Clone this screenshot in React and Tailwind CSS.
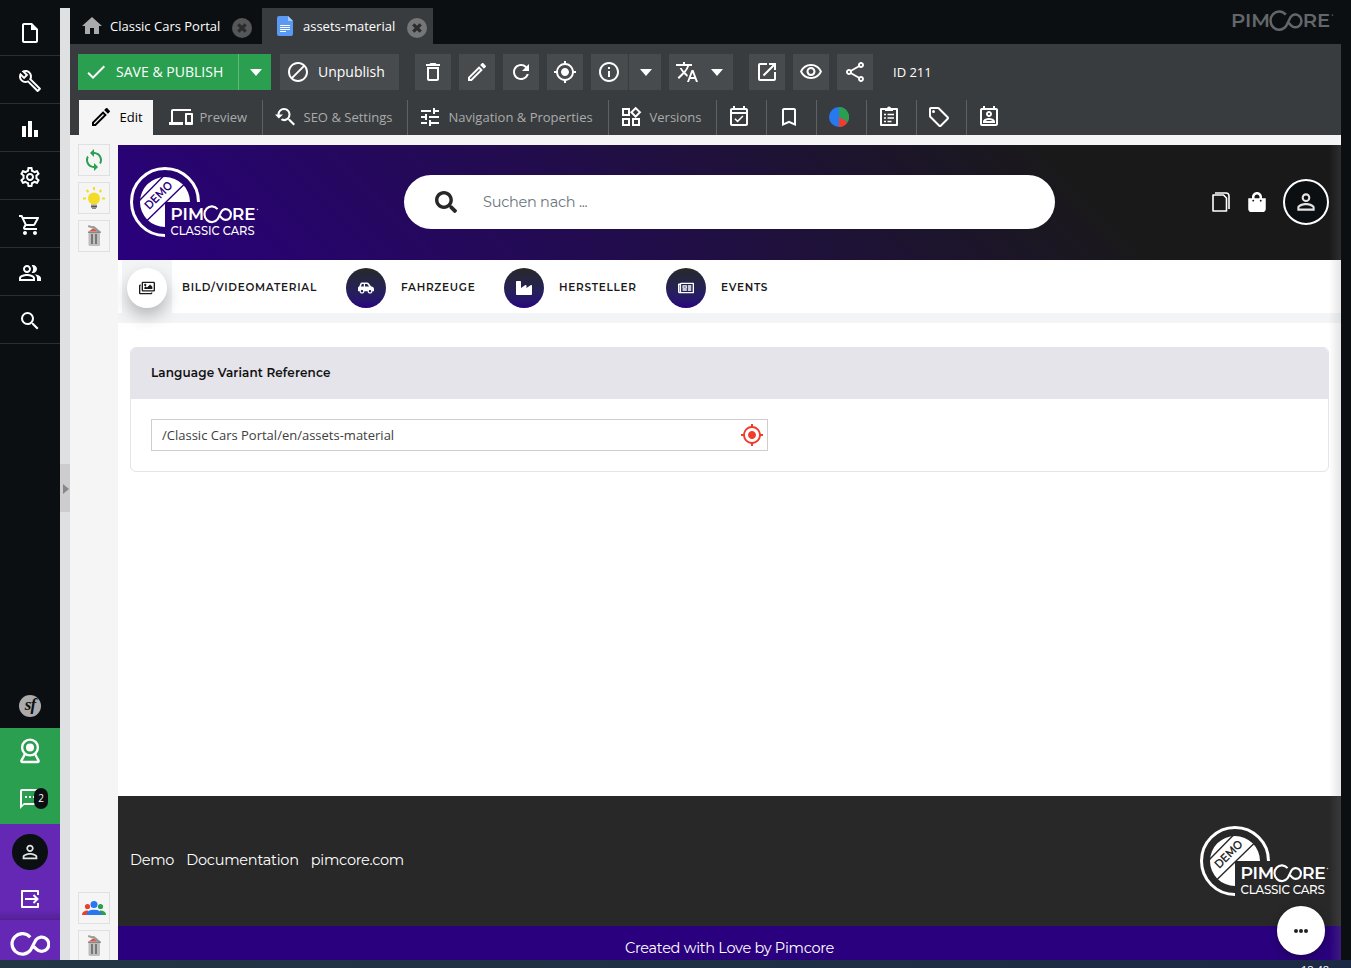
import React from "react";
import {
  MdOutlineInsertDriveFile, MdOutlineBuild, MdBarChart, MdOutlineSettings, MdOutlineShoppingCart,
  MdOutlinePeopleAlt, MdSearch, MdOutlineTextsms, MdPersonOutline, MdHome, MdCheck, MdBlock,
  MdDeleteOutline, MdOutlineEdit, MdRefresh, MdGpsFixed, MdInfoOutline, MdTranslate, MdOpenInNew,
  MdOutlineVisibility, MdOutlineShare, MdOutlineDevices, MdYoutubeSearchedFor, MdTune,
  MdOutlineWidgets, MdOutlineEventAvailable, MdBookmarkBorder, MdOutlineLocalOffer,
  MdOutlinePermContactCalendar, MdSync,
} from "react-icons/md";
import { FaSearch, FaShoppingBag, FaRegImages, FaCarSide, FaIndustry, FaRegNewspaper } from "react-icons/fa";

const LOOP = "M20.2 5.2 A10.3 10.3 0 1 0 20.6 18 L25.8 8 A7.2 7.2 0 1 1 26.4 17.2 L23.8 14.6";
const BRAND_FONT = "Montserrat, Inter, sans-serif";

function Caret() {
  return (
    <svg width="12" height="7" viewBox="0 0 12 7" className="fill-white">
      <path d="M0 0h12L6 7z" />
    </svg>
  );
}

function CloseDot({ fill }) {
  return (
    <svg width="20" height="20" viewBox="0 0 20 20" className="mt-[3px] shrink-0">
      <circle cx="10" cy="10" r="10" fill={fill} />
      <path d="M6.3 6.3l7.4 7.4M13.7 6.3l-7.4 7.4" stroke="#2a2c2e" strokeWidth="3.2" />
    </svg>
  );
}

function DocIcon() {
  return (
    <svg width="16" height="20" viewBox="0 0 16 20">
      <path d="M2 0h9l5 5v13a2 2 0 0 1-2 2H2a2 2 0 0 1-2-2V2a2 2 0 0 1 2-2z" fill="#5a9af5" />
      <path d="M11 0l5 5h-5z" fill="#a9cbfb" />
      <path d="M3 9.500h10M3 11.500h10M3 13.500h10M3 15.500h6" stroke="#fff" strokeWidth="1" />
    </svg>
  );
}

function ClipboardIcon() {
  return (
    <svg width="24" height="24" viewBox="0 0 24 24" fill="none" stroke="#fff" strokeWidth="2">
      <path d="M4 4h16v16H4z" strokeLinejoin="round" />
      <path d="M8 3h8v3H8z" fill="#fff" stroke="none" />
      <circle cx="12" cy="3.4" r="2" fill="#fff" stroke="none" />
      <path d="M7 9.5h2M10.500 9.5h6.500M7 13h2M10.500 13h6.500M7 16.500h2M10.500 16.500h4" strokeWidth="1.300" />
    </svg>
  );
}

function PieIcon() {
  return (
    <svg width="20" height="20" viewBox="0 0 20 20">
      <circle cx="10" cy="10" r="10" fill="#2878f0" />
      <path d="M10 10V0a10 10 0 0 1 8.7 15z" fill="#2a9f4f" />
      <path d="M10 10l8.7 5A10 10 0 0 1 10 20z" fill="#f23c2b" />
    </svg>
  );
}

function BulbIcon() {
  return (
    <svg width="24" height="24" viewBox="0 0 24 24">
      <circle cx="12" cy="12.500" r="6" fill="#f2dc27" />
      <path d="M12 1v3M4.500 4l2 2M19.500 4l-2 2M1 12.500h3M20 12.500h3" stroke="#f2dc27" strokeWidth="2" />
      <path d="M9 18.500h6v2H9z" fill="#999" />
      <path d="M9 20h6v1.500H9z" fill="#555" />
      <path d="M10 21.500h4V23h-4z" fill="#888" />
    </svg>
  );
}

function BinIcon() {
  return (
    <svg width="24" height="24" viewBox="0 0 24 24">
      <path d="M6.500 7.500l4-2.700 3 .5 3 2.200z" fill="#f0503c" />
      <path d="M6.500 1l3.500 1.200 2-.2 2.500 2 4.500 4-.8 1.200L11.500 4.800 6 3z" fill="#999" />
      <path d="M6 7.500h12.500V9H6z" fill="#888" />
      <path d="M6.500 9h11.500v11.500a1.500 1.500 0 0 1-1.500 1.500H8a1.500 1.500 0 0 1-1.500-1.500z" fill="#bdbdbd" />
      <path d="M10 10v10M14 10v10" stroke="#777" strokeWidth="2" />
    </svg>
  );
}

function TeamIcon() {
  return (
    <svg width="24" height="24" viewBox="0 0 24 24">
      <circle cx="5.500" cy="10.500" r="2.600" fill="#f23c2b" />
      <circle cx="18.500" cy="10.500" r="2.600" fill="#2a9f4f" />
      <path d="M0 19q0-4.500 6-4.500V19z" fill="#f23c2b" />
      <path d="M24 19q0-4.500-6-4.500V19z" fill="#2a9f4f" />
      <circle cx="12" cy="8.500" r="3.500" fill="#2878f0" />
      <path d="M4.500 19q0-5.200 7.500-5.200t7.500 5.200z" fill="#2878f0" />
    </svg>
  );
}

function Brand({ fill, width, height }) {
  return (
    <svg width={width} height={height} viewBox="0 0 90 18" fill={fill} overflow="visible">
      <text x="-.5" y="14" fontFamily={BRAND_FONT} fontWeight="600" fontSize="16" textLength="33.500" lengthAdjust="spacingAndGlyphs">PIM</text>
      <path d={LOOP} transform="translate(32 -.8) scale(.72 .76)" fill="none" stroke={fill} strokeWidth="2.900" />
      <text x="61" y="14" fontFamily={BRAND_FONT} fontWeight="600" fontSize="16" textLength="23.500" lengthAdjust="spacingAndGlyphs">RE</text>
      <circle cx="86.500" cy="3.500" r=".8" opacity=".7" />
    </svg>
  );
}

function PortalLogo({ cut }) {
  return (
    <svg width="130" height="70" viewBox="0 0 130 70" overflow="visible" className="shrink-0">
      <path d="M68.500 35A33.500 33.500 0 1 0 35 68.500" fill="none" stroke="#fff" strokeWidth="3" />
      <path d="M35 35H60A25 25 0 1 0 35 60z" fill="#fff" />
      <path d="M9 34L33.500 9M16 54.500L54.500 17" stroke={cut} strokeWidth="1.400" />
      <text transform="translate(19.300 43.200) rotate(-45)" fill={cut} fontFamily={BRAND_FONT} fontWeight="600" fontSize="12" textLength="34" lengthAdjust="spacingAndGlyphs">DEMO</text>
      <g transform="translate(41 39)">
        <Brand fill="#fff" width="90" height="18" />
      </g>
      <text x="40.500" y="68" fill="#fff" fontFamily={BRAND_FONT} fontWeight="500" fontSize="12.500" textLength="84" lengthAdjust="spacingAndGlyphs">CLASSIC CARS</text>
    </svg>
  );
}

function Sidebar() {
  const icons = [MdOutlineInsertDriveFile, MdOutlineBuild, MdBarChart, MdOutlineSettings, MdOutlineShoppingCart, MdOutlinePeopleAlt, MdSearch];
  return (
    <nav className="flex w-[60px] shrink-0 flex-col text-white">
      {icons.map((Icon, i) => (
        <div key={i} className="flex h-12 items-center justify-center border-b border-[#2b2f32] pt-[3px]">
          <Icon size={24} />
        </div>
      ))}
      <div className="flex-1" />
      <div className="flex h-12 items-center justify-center pt-1">
        <span className="flex size-[22px] items-center justify-center rounded-full bg-[#ababab] pb-1 font-['Liberation_Serif',serif] text-[17px] leading-none font-bold tracking-[-1px] text-[#0b0f12] italic">sf</span>
      </div>
      <div className="flex h-24 flex-col items-center bg-[#2a9f4f]">
        <div className="flex h-12 items-center pb-[2px]">
          <svg width="22" height="26" viewBox="0 0 22 26" fill="none" stroke="#fff" strokeWidth="2.400">
            <circle cx="11" cy="9.500" r="7.900" />
            <circle cx="11" cy="9.500" r="4" fill="#fff" stroke="none" />
            <path d="M6 16L2.500 22.500q-.5 1.500 1 1.500h15q1.500 0 1-1.500L16 16" />
          </svg>
        </div>
        <div className="relative flex h-12 items-center pb-[2px]">
          <MdOutlineTextsms size={24} />
          <span className="absolute top-[12px] left-[16px] flex h-[21px] w-[14px] items-center justify-center rounded-[7px] bg-[#0b0f12] text-[10px]">2</span>
        </div>
      </div>
      <div className="flex h-[95px] flex-col items-center bg-linear-to-b from-[#6428b4] from-90% to-[#562299] pt-[10px]">
        <div className="flex size-9 items-center justify-center rounded-full bg-[#0b0f12] text-[#e4e4e4]">
          <MdPersonOutline size={22} />
        </div>
        <svg width="20" height="20" viewBox="0 0 20 20" fill="none" stroke="#fff" strokeWidth="2" className="mt-[19px]">
          <path d="M18 6V2H2v16h16v-4" strokeLinejoin="round" />
          <path d="M5 10h12M13.500 6l4 4-4 4" />
        </svg>
      </div>
      <div className="flex h-[41px] items-center justify-center border-t border-[#50208f] bg-[#6428b4] pt-[7px]">
        <svg width="40" height="24" viewBox="0 0 40 24" fill="none" stroke="#fff" strokeWidth="3.200">
          <path d={LOOP} />
        </svg>
      </div>
    </nav>
  );
}

function Tool({ children, className = "w-9" }) {
  return <button className={`flex h-9 shrink-0 items-center justify-center bg-[#484b4d] ${className}`}>{children}</button>;
}

function Toolbar() {
  return (
    <div className="flex h-[46px] items-end pl-2">
      <button className="flex h-9 w-[160px] items-center bg-[#2a9f4f] pl-[6px] text-[14px]">
        <MdCheck size={24} />
        <span className="ml-[8px] pb-[1px] tracking-[0.020px]">SAVE &amp; PUBLISH</span>
      </button>
      <button className="flex h-9 w-[33px] items-center justify-center border-l border-[#5dba7a] bg-[#2a9f4f] pl-[2px]"><Caret /></button>
      <button className="ml-[9px] flex h-9 w-[119px] items-center bg-[#484b4d] pl-[6px] text-[14px]">
        <MdBlock size={24} />
        <span className="ml-2 pb-[2px]">Unpublish</span>
      </button>
      <div className="ml-4 flex gap-2">
        <Tool><MdDeleteOutline size={24} /></Tool>
        <Tool><MdOutlineEdit size={24} /></Tool>
        <Tool><MdRefresh size={24} /></Tool>
        <Tool><MdGpsFixed size={24} /></Tool>
        <div className="flex gap-px">
          <Tool className="w-[37px] pr-px"><MdInfoOutline size={24} /></Tool>
          <Tool className="w-8 pl-[2px]"><Caret /></Tool>
        </div>
        <Tool className="w-16 gap-3 pr-[4px]"><MdTranslate size={24} /><Caret /></Tool>
      </div>
      <div className="ml-4 flex gap-2">
        <Tool><MdOpenInNew size={24} /></Tool>
        <Tool><MdOutlineVisibility size={24} /></Tool>
        <Tool><MdOutlineShare size={24} /></Tool>
      </div>
      <span className="ml-5 flex h-9 items-center pt-[2px] text-[13px]">ID 211</span>
    </div>
  );
}

function SubTab({ icon, label, className }) {
  return (
    <div className={`flex h-[35px] shrink-0 items-center gap-[6.500px] text-[13px] ${className}`}>
      <span className="pb-[1px]">{icon}</span>
      <span className="tracking-[0.010px] whitespace-nowrap">{label}</span>
    </div>
  );
}

function SubTabs() {
  const rest = "border-l border-[#5f6264] pl-[10px] text-[#a9abac]";
  const small = [MdOutlineEventAvailable, MdBookmarkBorder, PieIcon, ClipboardIcon, MdOutlineLocalOffer, MdOutlinePermContactCalendar];
  return (
    <div className="mt-[10px] flex pl-[9px]">
      <SubTab className="w-[74px] bg-[#f5f5f5] pl-[10px] text-black" icon={<MdOutlineEdit size={24} />} label="Edit" />
      <SubTab className="w-[109px] pl-[16px] text-[#a9abac]" icon={<MdOutlineDevices size={24} className="text-white" />} label="Preview" />
      <SubTab className={`w-[145px] ${rest}`} icon={<MdYoutubeSearchedFor size={24} className="text-white" />} label="SEO & Settings" />
      <SubTab className={`w-[201px] ${rest}`} icon={<MdTune size={24} className="text-white" />} label="Navigation & Properties" />
      <SubTab className={`w-[108px] ${rest}`} icon={<MdOutlineWidgets size={24} className="text-white" />} label="Versions" />
      {small.map((Icon, i) => (
        <div key={i} className="flex h-[35px] w-[50px] items-center justify-center border-l border-[#5f6264] pr-[5px] pb-[2px]"><Icon size={24} /></div>
      ))}
    </div>
  );
}

function SideButton({ children }) {
  return <div className="flex size-8 shrink-0 items-center justify-center border border-[#e0e0e0]">{children}</div>;
}

function PortalHeader() {
  return (
    <header className="flex h-[115px] items-center bg-[linear-gradient(45deg,#2a007e_0%,#191919_78%)] pb-[2px] pl-3">
      <PortalLogo cut="#2a007e" />
      <div className="ml-[144px] flex h-[54px] w-[651px] items-center rounded-full bg-white pl-[31px]">
        <FaSearch size={22} className="text-[#282828]" />
        <span className="ml-[26px] pt-[2px] text-[14.500px] tracking-[-0.250px] text-[#6c757d]">Suchen nach ...</span>
      </div>
      <svg width="18" height="20" viewBox="0 0 18 20" fill="none" stroke="#fff" strokeWidth="1.600" className="ml-[157px]">
        <path d="M1 3h10.500L14.500 6v13H1z" strokeLinejoin="round" />
        <path d="M3 1h11q3 0 3 3v13" />
      </svg>
      <FaShoppingBag size={20} className="ml-[17px] text-white" />
      <div className="ml-[16px] flex size-[46px] items-center justify-center rounded-full border-2 border-white bg-[#0b0f12] text-[#e4e4e4]">
        <MdPersonOutline size={26} />
      </div>
    </header>
  );
}

function NavItem({ icon, label, className }) {
  return (
    <div className={`flex items-center ${className}`}>
      <span className="flex size-10 items-center justify-center rounded-full bg-linear-to-b from-[#282828] to-[#2a007e] text-white">{icon}</span>
      <span className="ml-[15px] whitespace-nowrap">{label}</span>
    </div>
  );
}

function Portal() {
  return (
    <div className="relative flex w-[1223px] flex-col overflow-hidden bg-white font-['Montserrat',Inter,sans-serif]">
      <PortalHeader />
      <div className="flex h-[63px] border-b-[10px] border-[#f3f4f6] pl-1 text-[10.500px] font-semibold tracking-[0.730px] text-[#1a1a1a]">
        <div className="flex h-[53px] w-[50px] items-center justify-center bg-[#f3f4f6] pt-[3px]">
          <span className="flex size-10 items-center justify-center rounded-full bg-white shadow-[0_8px_16px_rgba(0,0,0,0.25)]"><FaRegImages size={16} /></span>
        </div>
        <span className="ml-[10px] flex h-[53px] w-[164px] items-center pt-[2px] whitespace-nowrap">BILD/VIDEOMATERIAL</span>
        <NavItem className="w-[158px] pt-[2px]" icon={<FaCarSide size={16} />} label="FAHRZEUGE" />
        <NavItem className="w-[162px] pt-[2px]" icon={<FaIndustry size={16} />} label="HERSTELLER" />
        <NavItem className="pt-[2px]" icon={<FaRegNewspaper size={16} />} label="EVENTS" />
      </div>
      <section className="mx-3 mt-6 h-[125px] rounded-md border border-[#e4e4ea]">
        <h2 className="flex h-[51px] items-center rounded-t-[5px] bg-[#e4e4ea] pb-[2px] pl-5 text-[12px] font-semibold tracking-[0.120px] text-[#111]">Language Variant Reference</h2>
        <div className="mt-5 ml-5 flex h-8 w-[617px] items-center justify-between border border-[#cecece] pr-[3px] pl-[10px] font-['Open_Sans',sans-serif] text-[13px] text-[#404040]">
          <span className="pt-[2px]">/Classic Cars Portal/en/assets-material</span>
          <MdGpsFixed size={24} className="text-[#f23c2b]" />
        </div>
      </section>
      <div className="flex-1" />
      <footer>
        <div className="flex h-[130px] items-center justify-between bg-[#282828] pr-[11px] pl-3 text-[14.500px] tracking-[-0.250px] text-white">
          <div className="flex gap-[12px]"><span>Demo</span><span>Documentation</span><span>pimcore.com</span></div>
          <PortalLogo cut="#282828" />
        </div>
        <div className="flex h-[34px] items-center justify-center bg-[#2a007e] pt-[11px] text-[14.500px] tracking-[-0.280px] text-white">Created with Love by Pimcore</div>
      </footer>
      <div className="absolute top-0 right-0 h-full w-3 bg-linear-to-r from-transparent to-[#80808034]" />
      <div className="absolute right-4 bottom-[5px] flex h-[49px] w-12 items-center justify-center gap-[1px] rounded-full bg-white shadow-[0_3px_8px_rgba(0,0,0,0.35)]">
        <i className="size-[4px] rounded-full bg-[#222]" /><i className="size-[4px] rounded-full bg-[#222]" /><i className="size-[4px] rounded-full bg-[#222]" />
      </div>
    </div>
  );
}

export default function App() {
  return (
    <div className="flex h-[968px] w-[1351px] flex-col overflow-hidden bg-[#0b0f12] pt-2 font-['Open_Sans',sans-serif]">
      <div className="flex h-[952px] shrink-0">
        <Sidebar />
        <div className="flex w-[10px] shrink-0 flex-col justify-center bg-[#dfe0e2]">
          <div className="mt-2 flex h-12 items-center justify-center bg-[#cdcdcf] pt-px pl-[2px]">
            <svg width="6" height="10" viewBox="0 0 6 10"><path d="M0 0l6 5-6 5z" fill="#888" /></svg>
          </div>
        </div>
        <main className="flex w-[1271px] flex-col text-white">
          <div className="flex h-9 shrink-0 items-center text-[13px]">
            <div className="flex h-9 w-[192px] items-center pl-[10px]">
              <MdHome size={24} className="text-[#aaabac]" />
              <span className="ml-[6px] w-[122px] pt-[2px] whitespace-nowrap">Classic Cars Portal</span>
              <CloseDot fill="#555657" />
            </div>
            <div className="flex h-9 w-[171px] items-center bg-[#393c3e] pl-[15px]">
              <DocIcon />
              <span className="ml-[10px] w-[104px] pt-[2px] whitespace-nowrap">assets-material</span>
              <CloseDot fill="#757677" />
            </div>
            <div className="ml-auto pr-[4px] pb-[10px]"><Brand fill="#63676a" width="106" height="21" /></div>
          </div>
          <div className="h-[91px] shrink-0 bg-[#393c3e]">
            <Toolbar />
            <SubTabs />
          </div>
          <div className="flex min-h-0 flex-1 bg-[#f5f5f5] pt-[10px]">
            <aside className="-mt-px flex w-12 flex-col items-center gap-[6px]">
              <SideButton><MdSync size={24} className="text-[#2a9f4f]" /></SideButton>
              <SideButton><BulbIcon /></SideButton>
              <SideButton><BinIcon /></SideButton>
              <div className="flex-1" />
              <SideButton><TeamIcon /></SideButton>
              <div className="-mb-[2px] h-8 shrink-0"><SideButton><BinIcon /></SideButton></div>
            </aside>
            <Portal />
          </div>
        </main>
      </div>
      <div className="relative flex h-2 shrink-0 justify-end overflow-hidden bg-linear-to-r from-[#233644] to-[#1c2944] pt-[3px] pr-[22px] text-[11px] leading-[14px] text-white">18:48</div>
    </div>
  );
}
